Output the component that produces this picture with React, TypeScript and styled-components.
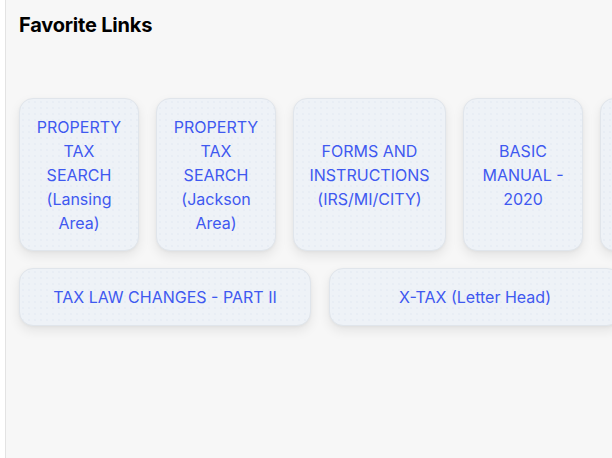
import React from "react";
import styled, { createGlobalStyle } from "styled-components";

const Global = createGlobalStyle`
  html, body { margin: 0; padding: 0; background: #ffffff; }
  body { font-family: Inter, "Noto Sans", "Liberation Sans", sans-serif; overflow: hidden; }
`;

const Page = styled.div`
  display: flex;
  width: 612px;
  height: 458px;
  overflow: hidden;
`;

const Gutter = styled.div`
  width: 5px;
  flex: none;
  background: #ffffff;
  border-right: 1px solid #e3e3e3;
`;

const Main = styled.main`
  flex: 1;
  min-width: 0;
  background: #f7f7f7;
  padding: 13px 0 0 13px;
  overflow: hidden;
`;

const Title = styled.h2`
  margin: 0;
  font-size: 20px;
  line-height: 24px;
  font-weight: 700;
  color: #000000;
  letter-spacing: -0.2px;
`;

const Rows = styled.div`
  display: flex;
  flex-direction: column;
  gap: 17px;
  margin-top: 61px;
`;

const Row = styled.div<{ $gap: number }>`
  display: flex;
  gap: ${(p) => p.$gap}px;
`;

const Card = styled.a<{ $w: number; $h: number }>`
  flex: none;
  box-sizing: border-box;
  width: ${(p) => p.$w}px;
  height: ${(p) => p.$h}px;
  display: flex;
  align-items: center;
  justify-content: center;
  text-align: center;
  padding: 0 17px;
  border: 1px solid #e0e5eb;
  border-radius: 14px;
  background-color: #eef2f7;
  background-image: radial-gradient(circle, rgba(170, 185, 210, 0.13) 0.6px, transparent 0.9px);
  background-size: 6px 6px;
  box-shadow: 0 5px 12px rgba(0, 0, 0, 0.08), 0 1px 3px rgba(0, 0, 0, 0.04);
  color: #3f59f0;
  font-size: 16px;
  line-height: 24px;
  font-weight: 400;
  text-decoration: none;
`;

const row1 = [
  { t: "PROPERTY TAX SEARCH (Lansing Area)", w: 120 },
  { t: "PROPERTY TAX SEARCH (Jackson Area)", w: 120 },
  { t: "FORMS AND INSTRUCTIONS (IRS/MI/CITY)", w: 153 },
  { t: "BASIC MANUAL - 2020", w: 120 },
  { t: "", w: 120 },
];

const row2 = [
  { t: "TAX LAW CHANGES - PART II", w: 292 },
  { t: "X-TAX (Letter Head)", w: 292 },
];

export default function App() {
  return (
    <>
      <Global />
      <Page>
        <Gutter />
        <Main>
          <Title>Favorite Links</Title>
          <Rows>
            <Row $gap={17}>
              {row1.map((c, i) => (
                <Card key={i} $w={c.w} $h={153}>
                  {c.t}
                </Card>
              ))}
            </Row>
            <Row $gap={18}>
              {row2.map((c, i) => (
                <Card key={i} $w={c.w} $h={58}>
                  {c.t}
                </Card>
              ))}
            </Row>
          </Rows>
        </Main>
      </Page>
    </>
  );
}
